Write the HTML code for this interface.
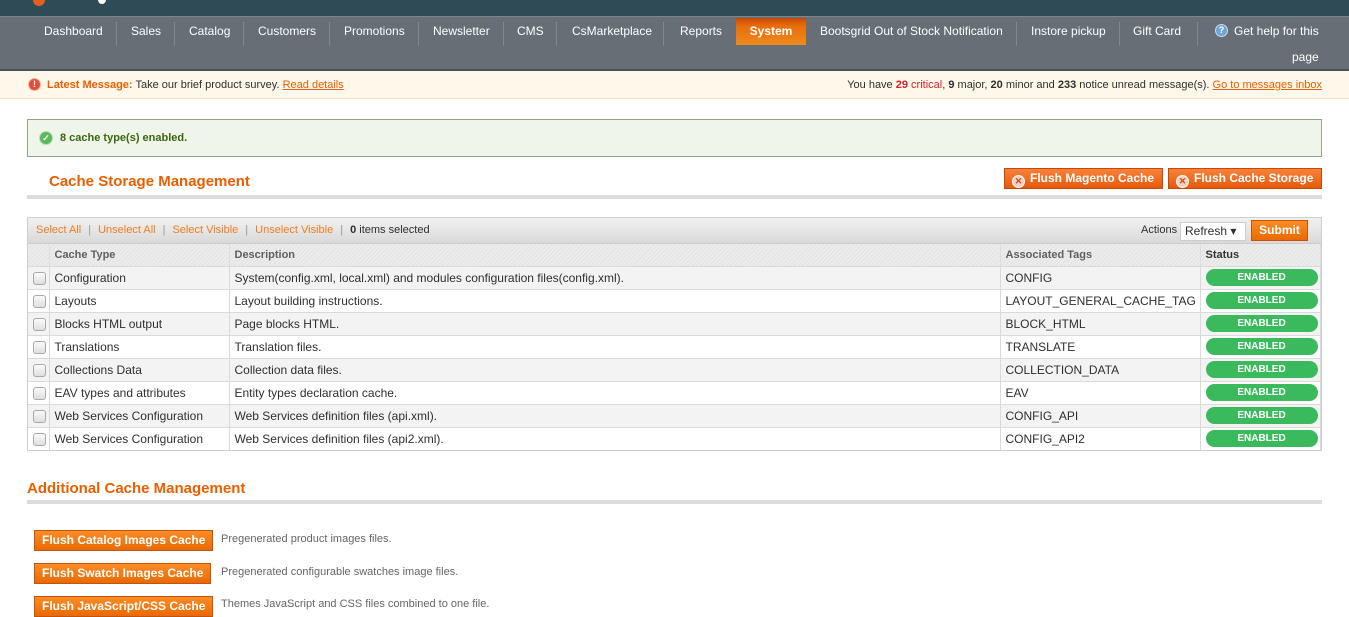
<!DOCTYPE html>
<html><head><meta charset="utf-8"><style>
*{box-sizing:border-box;margin:0;padding:0}
body{width:1349px;height:609px;overflow:hidden;background:#fff;font-family:"Liberation Sans",Arial,sans-serif;font-size:12px;color:#2f2f2f;position:relative}
.a{position:absolute}
#hdr{left:0;top:0;width:1349px;height:16px;background:#2f4b55}
#nav{left:0;top:16px;width:1349px;height:55px;background:#676e75;border-top:1px solid #7d858c;border-bottom:2px solid #4a5057}
.ni{position:absolute;top:7px;color:#fff;font-size:12px;height:20px;line-height:15px}
.sep{position:absolute;top:5px;width:1px;height:24px;background:#80878e}
#msg{left:0;top:71px;width:1349px;height:28px;background:#fdf8e9;border-bottom:1px solid #eee2c0;font-size:11px;line-height:28px}
.or{color:#eb5e00}
#ok{left:27px;top:119px;width:1295px;height:38px;background:#eff5ea;border:1px solid #95a486;font-weight:bold;font-size:11px;color:#3d6611;line-height:36px;padding-left:32px}
h3{position:absolute;color:#eb5e00;font-size:15px;font-weight:bold}
.bar{position:absolute;left:27px;width:1295px;height:4px;background:#dcdcdc}
.btn{position:absolute;height:21px;background:linear-gradient(#f9813a,#e55b0d);border:1px solid #c74608;color:#fff;font-weight:bold;font-size:12px;line-height:19px;padding:0 7px;white-space:nowrap}
.btn2{background:linear-gradient(#fb8c26,#e96a05);border:1px solid #c4540a}
.x{display:inline-block;width:13px;height:13px;border-radius:50%;background:#f4d0c0;border:1px solid #fff;vertical-align:-2px;margin-right:5px;color:#d0470d;font-size:9px;line-height:11px;text-align:center}
#grid{left:27px;top:217px;width:1295px;height:234px;border:1px solid #cfcfcf}
#tb{height:26px;background:linear-gradient(#f1f1f1,#d9d9d9);font-size:11px;line-height:25px;padding-left:8px;border-bottom:1px solid #ccc;position:relative}
#tb .s{color:#999;margin:0 7px}
table{border-collapse:collapse;width:100%;font-size:12px}
th{height:22px;background:repeating-linear-gradient(135deg,#e3e3e3 0 1px,#ececec 1px 3px);text-align:left;font-size:11px;color:#5f5f5f;padding-left:5px;border-right:1px solid #ddd}
td{height:23px;padding-left:5px;border-right:1px solid #dadada;border-top:1px solid #dadada;line-height:20px}
tr.o td{background:#f3f3f3}
.cb{display:inline-block;width:13px;height:13px;border:1px solid #a9a9a9;border-radius:3px;background:linear-gradient(#fbfbfb,#dedede);vertical-align:middle}
.en{display:block;width:112px;height:17px;border-radius:9px;background:#3aba5c;color:#fff;font-weight:bold;font-size:10px;text-align:center;line-height:17px}
.d{position:absolute;color:#666;font-size:11px}
</style></head><body>
<div id="hdr" class="a"><div class="a" style="left:33px;top:0;width:12px;height:6px;background:#e45f1d;border-radius:0 0 6px 6px"></div><div class="a" style="left:98px;top:0;width:8px;height:4px;background:#fff;border-radius:0 0 4px 4px"></div></div>
<div id="nav" class="a">
<span class="ni" style="left:44px">Dashboard</span><i class="sep" style="left:116px"></i>
<span class="ni" style="left:131px">Sales</span><i class="sep" style="left:174px"></i>
<span class="ni" style="left:189px">Catalog</span><i class="sep" style="left:243px"></i>
<span class="ni" style="left:258px">Customers</span><i class="sep" style="left:329px"></i>
<span class="ni" style="left:344px">Promotions</span><i class="sep" style="left:418px"></i>
<span class="ni" style="left:433px">Newsletter</span><i class="sep" style="left:503px"></i>
<span class="ni" style="left:517px">CMS</span><i class="sep" style="left:556px"></i>
<span class="ni" style="left:572px">CsMarketplace</span><i class="sep" style="left:663px"></i>
<span class="ni" style="left:680px">Reports</span>
<div class="a" style="left:736px;top:1px;width:70px;height:27px;background:linear-gradient(#c24a08,#e96d0c 30%,#ef8a1c);color:#fff;font-weight:bold;text-align:center;line-height:27px">System</div>
<span class="ni" style="left:820px">Bootsgrid Out of Stock Notification</span><i class="sep" style="left:1016px"></i>
<span class="ni" style="left:1031px">Instore pickup</span><i class="sep" style="left:1119px"></i>
<span class="ni" style="left:1133px">Gift Card</span><i class="sep" style="left:1197px"></i>
<span class="a" style="left:1215px;top:7px;width:13px;height:13px;border-radius:50%;background:#6ea4d8;border:1px solid #c8dcef;color:#fff;font-size:9px;font-weight:bold;text-align:center;line-height:11px">?</span>
<span class="ni" style="left:1234px">Get help for this</span>
<span class="ni" style="left:1292px;top:33px">page</span>
</div>
<div id="msg" class="a">
<span class="a" style="left:28px;top:7px;width:13px;height:13px;border-radius:50%;background:#e0503a;border:1px solid #f3b4a8;color:#fff;font-size:9px;font-weight:bold;text-align:center;line-height:11px">!</span>
<span class="a" style="left:47px"><b class="or">Latest Message:</b> Take our brief product survey. <u class="or">Read details</u></span>
<span class="a" style="right:27px">You have <b style="color:#d6202a">29</b> <span style="color:#d6202a">critical</span>, <b>9</b> major, <b>20</b> minor and <b>233</b> notice unread message(s). <u class="or">Go to messages inbox</u></span>
</div>
<div id="ok" class="a"><span class="a" style="left:11px;top:11px;width:14px;height:14px;border-radius:50%;background:#5cb85c;border:1px solid #b9ddb0;color:#fff;font-size:9px;text-align:center;line-height:12px">✓</span>8 cache type(s) enabled.</div>
<h3 style="left:49px;top:173px">Cache Storage Management</h3>
<div class="bar" style="top:195px"></div>
<div class="btn" style="left:1004px;top:168px;width:159px"><span class="x">✕</span>Flush Magento Cache</div>
<div class="btn" style="left:1168px;top:168px;width:154px"><span class="x">✕</span>Flush Cache Storage</div>
<div id="grid" class="a">
<div id="tb"><span style="color:#f07c1d">Select All</span><span class="s">|</span><span style="color:#f07c1d">Unselect All</span><span class="s">|</span><span style="color:#f07c1d">Select Visible</span><span class="s">|</span><span style="color:#f07c1d">Unselect Visible</span><span class="s">|</span><b>0</b> items selected
<span class="a" style="left:1113px;top:0">Actions</span>
<span class="a" style="left:1152px;top:4px;width:66px;height:19px;background:#fff;border:1px solid #ccc;line-height:17px;padding-left:4px;font-size:12px">Refresh ▾</span>
<span class="btn btn2" style="left:1223px;top:2px;width:57px;height:21px;text-align:center">Submit</span>
</div>
<table>
<tr><th style="width:21px"></th><th style="width:180px">Cache Type</th><th style="width:771px">Description</th><th style="width:200px">Associated Tags</th><th style="color:#333">Status</th></tr>
<tr class="o"><td><span class="cb"></span></td><td>Configuration</td><td>System(config.xml, local.xml) and modules configuration files(config.xml).</td><td>CONFIG</td><td><span class="en">ENABLED</span></td></tr>
<tr><td><span class="cb"></span></td><td>Layouts</td><td>Layout building instructions.</td><td>LAYOUT_GENERAL_CACHE_TAG</td><td><span class="en">ENABLED</span></td></tr>
<tr class="o"><td><span class="cb"></span></td><td>Blocks HTML output</td><td>Page blocks HTML.</td><td>BLOCK_HTML</td><td><span class="en">ENABLED</span></td></tr>
<tr><td><span class="cb"></span></td><td>Translations</td><td>Translation files.</td><td>TRANSLATE</td><td><span class="en">ENABLED</span></td></tr>
<tr class="o"><td><span class="cb"></span></td><td>Collections Data</td><td>Collection data files.</td><td>COLLECTION_DATA</td><td><span class="en">ENABLED</span></td></tr>
<tr><td><span class="cb"></span></td><td>EAV types and attributes</td><td>Entity types declaration cache.</td><td>EAV</td><td><span class="en">ENABLED</span></td></tr>
<tr class="o"><td><span class="cb"></span></td><td>Web Services Configuration</td><td>Web Services definition files (api.xml).</td><td>CONFIG_API</td><td><span class="en">ENABLED</span></td></tr>
<tr><td><span class="cb"></span></td><td>Web Services Configuration</td><td>Web Services definition files (api2.xml).</td><td>CONFIG_API2</td><td><span class="en">ENABLED</span></td></tr>
</table>
</div>
<h3 style="left:27px;top:480px">Additional Cache Management</h3>
<div class="bar" style="top:500px"></div>
<div class="btn btn2" style="left:34px;top:530px;width:179px">Flush Catalog Images Cache</div><span class="d" style="left:221px;top:533px">Pregenerated product images files.</span>
<div class="btn btn2" style="left:34px;top:563px;width:177px">Flush Swatch Images Cache</div><span class="d" style="left:221px;top:566px">Pregenerated configurable swatches image files.</span>
<div class="btn btn2" style="left:34px;top:596px;width:179px">Flush JavaScript/CSS Cache</div><span class="d" style="left:221px;top:598px">Themes JavaScript and CSS files combined to one file.</span>
</body></html>
